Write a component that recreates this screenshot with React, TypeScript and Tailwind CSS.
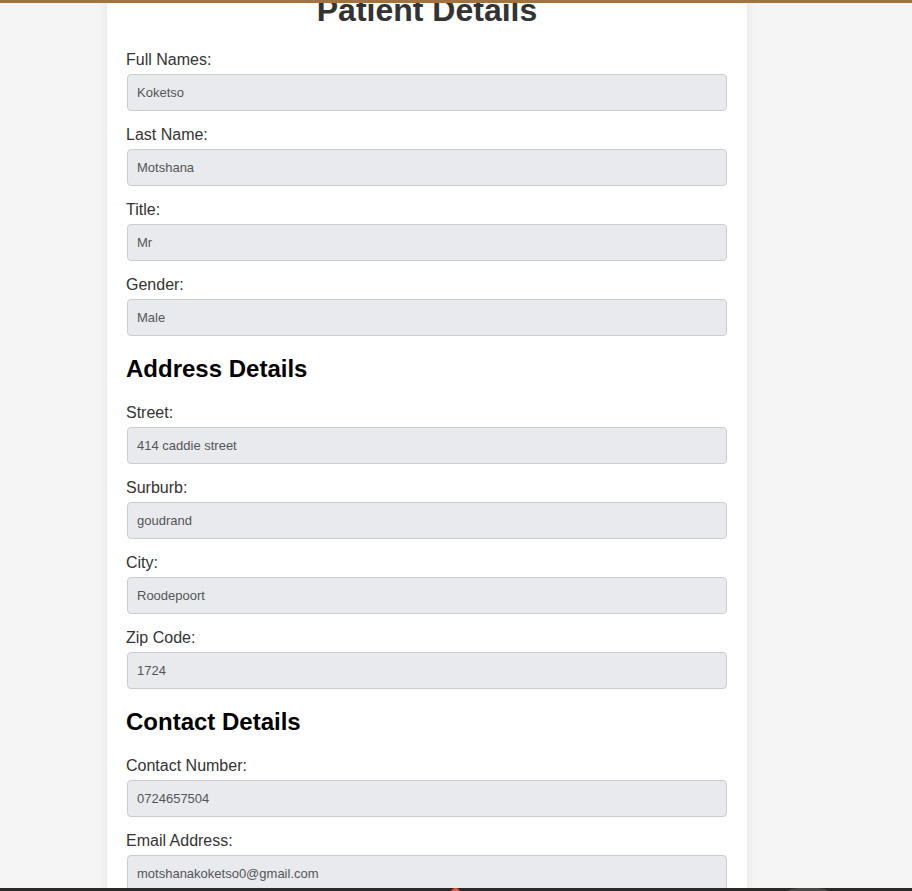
import React from "react";

// Read-only patient record, grouped by section
const PATIENT_FIELDS = [
  { label: "Full Names:", value: "Koketso" },
  { label: "Last Name:", value: "Motshana" },
  { label: "Title:", value: "Mr" },
  { label: "Gender:", value: "Male" },
];

const ADDRESS_FIELDS = [
  { label: "Street:", value: "414 caddie street" },
  { label: "Surburb:", value: "goudrand" },
  { label: "City:", value: "Roodepoort" },
  { label: "Zip Code:", value: "1724" },
];

const CONTACT_FIELDS = [
  { label: "Contact Number:", value: "0724657504" },
  { label: "Email Address:", value: "motshanakoketso0@gmail.com" },
];

function Field({ label, value }: { label: string; value: string }) {
  return (
    <div className="flex flex-col mb-[14px]">
      <label className="text-[16px] leading-[20px] text-[#333] mb-[4px] -ml-px">{label}</label>
      <input
        readOnly
        value={value}
        className="h-[37px] w-full rounded-[4px] border border-[#ccc] bg-[#e9eaee] px-[9px] text-[13px] text-[#555] outline-none"
      />
    </div>
  );
}

function SectionTitle({ children }: { children: React.ReactNode }) {
  return (
    <h2 className="mt-[19px] mb-[20px] -ml-px text-[24px] leading-[28px] font-bold text-black">{children}</h2>
  );
}

export default function App() {
  return (
    <div className="min-h-screen bg-[#f5f5f5] font-['Liberation_Sans',Arial,sans-serif] overflow-hidden">
      {/* header edge */}
      <div className="fixed top-0 left-0 right-0 h-[3px] bg-[#a5723f] z-10" />

      <div className="ml-[107px] w-[640px] -mt-[8px] bg-white px-[20px] pb-10 shadow-[0_0_10px_rgba(0,0,0,0.08)]">
        <h1 className="text-center text-[32px] leading-[36px] font-bold text-[#333] mb-[22px]">Patient Details</h1>

        {PATIENT_FIELDS.map((f) => (
          <Field key={f.label} {...f} />
        ))}

        <SectionTitle>Address Details</SectionTitle>
        {ADDRESS_FIELDS.map((f) => (
          <Field key={f.label} {...f} />
        ))}

        <SectionTitle>Contact Details</SectionTitle>
        {CONTACT_FIELDS.map((f) => (
          <Field key={f.label} {...f} />
        ))}
      </div>

      {/* bottom nav edge */}
      <div className="fixed bottom-0 left-0 right-0 h-[3px] bg-[#2c2a29] z-10 overflow-hidden">
        <div className="absolute left-[451px] top-0 h-[10px] w-[9px] rounded-full bg-[#e0553a]" />
        <div className="absolute left-[778px] top-0 h-[40px] w-[60px] rounded-full bg-[#4a4847]" />
      </div>
    </div>
  );
}
